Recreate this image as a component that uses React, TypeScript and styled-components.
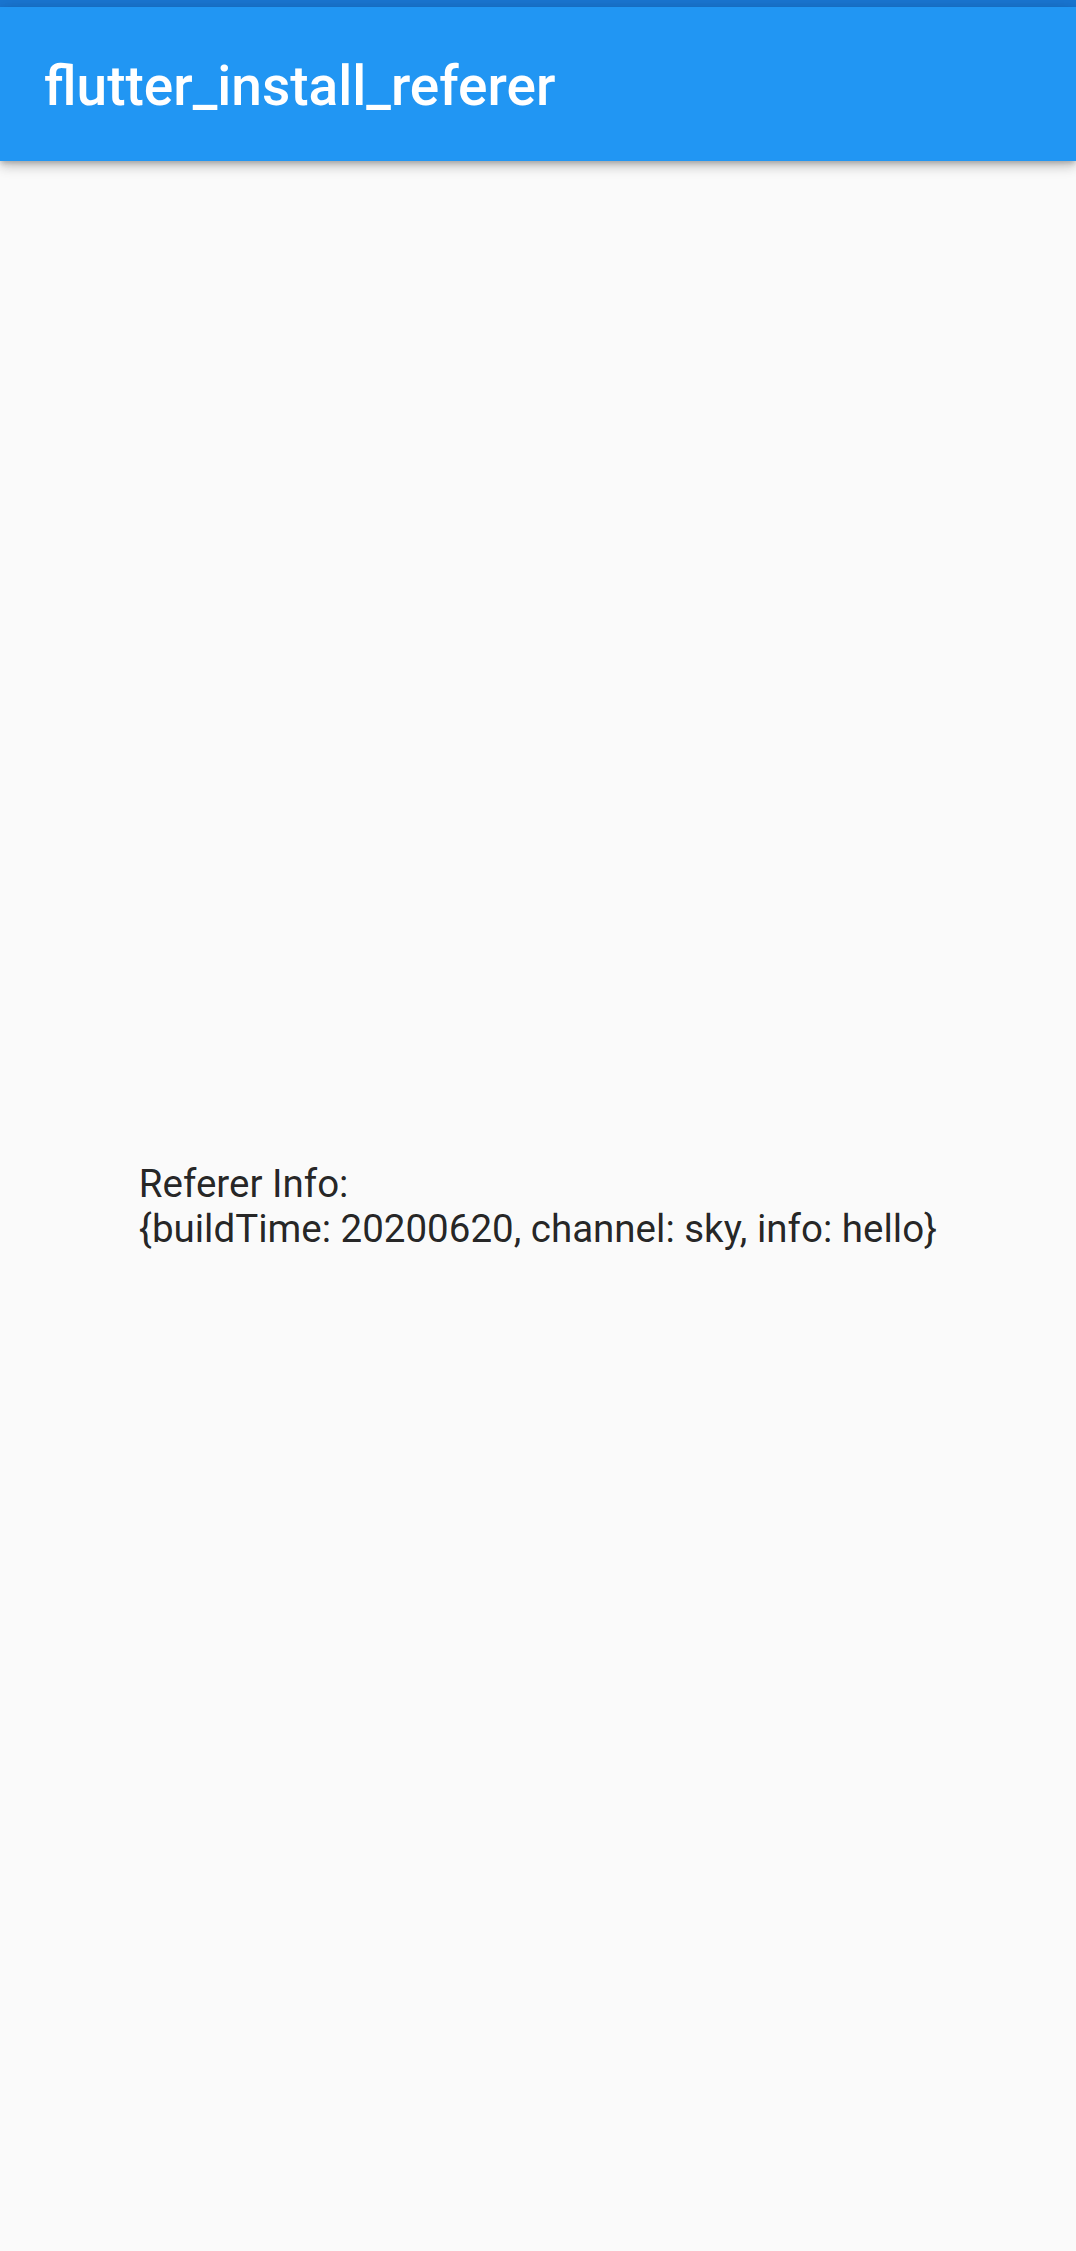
import React from "react";
import styled, { createGlobalStyle } from "styled-components";

const GlobalStyle = createGlobalStyle`
  html, body {
    margin: 0;
    padding: 0;
    background: #fafafa;
  }
  #root {
    min-height: 100vh;
  }
`;

const Screen = styled.div`
  display: flex;
  flex-direction: column;
  min-height: 100vh;
  background: #fafafa;
  font-family: Roboto, "Noto Sans", sans-serif;
`;

const StatusStrip = styled.div`
  height: 7px;
  background: #1976d2;
  flex: none;
`;

const AppBar = styled.header`
  position: relative;
  z-index: 1;
  flex: none;
  height: 154px;
  display: flex;
  align-items: center;
  padding: 4px 44px 0;
  box-sizing: border-box;
  background: #2196f3;
  box-shadow: 0 3px 5px -1px rgba(0, 0, 0, 0.2), 0 6px 10px 0 rgba(0, 0, 0, 0.14),
    0 1px 18px 0 rgba(0, 0, 0, 0.12);
`;

const Title = styled.h1`
  margin: 0;
  color: #ffffff;
  font-size: 55px;
  font-weight: 500;
  line-height: 1;
`;

const Body = styled.main`
  flex: 1;
  display: flex;
  align-items: center;
  justify-content: center;
`;

const InfoText = styled.p`
  margin: 0;
  color: rgba(0, 0, 0, 0.87);
  font-size: 38.5px;
  font-weight: 400;
  line-height: 45px;
  white-space: pre;
`;

export default function App() {
  return (
    <>
      <GlobalStyle />
      <Screen>
        <StatusStrip />
        <AppBar>
          <Title>flutter_install_referer</Title>
        </AppBar>
        <Body>
          <InfoText>
            {"Referer Info:\n{buildTime: 20200620, channel: sky, info: hello}"}
          </InfoText>
        </Body>
      </Screen>
    </>
  );
}
